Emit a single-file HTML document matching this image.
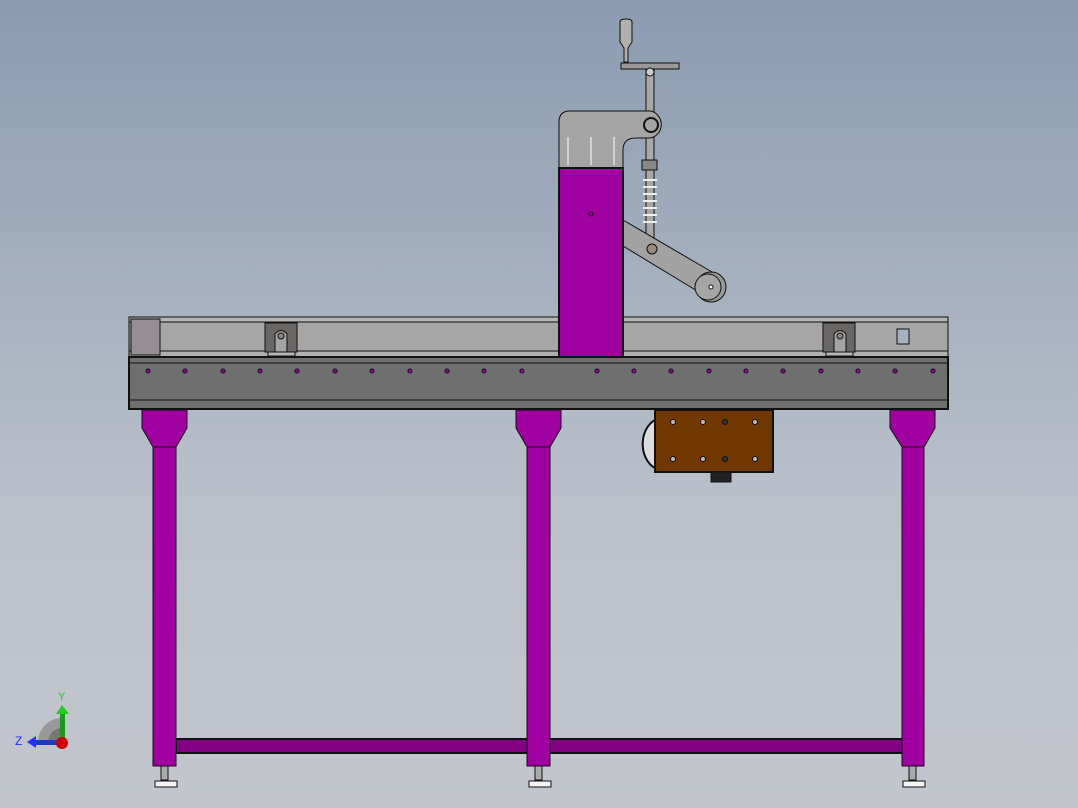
<!DOCTYPE html>
<html><head><style>
html,body{margin:0;padding:0;width:1078px;height:808px;overflow:hidden}
body{background:linear-gradient(#8a9bb1,#b9bfca 60%,#c3c6cd)}
svg{position:absolute;left:0;top:0}
</style></head><body>
<svg width="1078" height="808" viewBox="0 0 1078 808" stroke="#111" stroke-width="1">
<!-- top rail -->
<rect x="129" y="317" width="819" height="40" fill="#a6a6a6"/>
<rect x="129" y="317" width="819" height="5" fill="#b4b4b4"/>
<rect x="129" y="351" width="819" height="6" fill="#b0b0b0"/>
<rect x="131" y="319" width="29" height="36" fill="#958e92"/>
<!-- pivots -->
<rect x="265" y="323" width="32" height="29" fill="#6a6663"/>
<path d="M275,352 L275,334 Q281,327 287,334 L287,352 Z" fill="#a4a4a4"/>
<circle cx="281" cy="336" r="3" fill="#888"/>
<rect x="268" y="352" width="27" height="4" fill="#b8b8b8"/>
<rect x="823" y="323" width="32" height="29" fill="#6a6663"/>
<path d="M834,352 L834,334 Q840,327 846,334 L846,352 Z" fill="#a4a4a4"/>
<circle cx="840" cy="336" r="3" fill="#888"/>
<rect x="826" y="352" width="27" height="4" fill="#b8b8b8"/>
<rect x="897" y="329" width="12" height="15" fill="#a6b0c0"/>
<!-- beam -->
<rect x="129" y="357" width="819" height="52" fill="#6f6f6f" stroke-width="2"/>
<line x1="129" y1="363" x2="948" y2="363"/>
<line x1="129" y1="400" x2="948" y2="400"/>
<g fill="#a000a0" stroke-width="1">
<circle cx="148" cy="371" r="2"/><circle cx="185" cy="371" r="2"/><circle cx="223" cy="371" r="2"/><circle cx="260" cy="371" r="2"/><circle cx="297" cy="371" r="2"/><circle cx="335" cy="371" r="2"/><circle cx="372" cy="371" r="2"/><circle cx="410" cy="371" r="2"/><circle cx="447" cy="371" r="2"/><circle cx="484" cy="371" r="2"/><circle cx="522" cy="371" r="2"/><circle cx="597" cy="371" r="2"/><circle cx="634" cy="371" r="2"/><circle cx="671" cy="371" r="2"/><circle cx="709" cy="371" r="2"/><circle cx="746" cy="371" r="2"/><circle cx="783" cy="371" r="2"/><circle cx="821" cy="371" r="2"/><circle cx="858" cy="371" r="2"/><circle cx="895" cy="371" r="2"/><circle cx="933" cy="371" r="2"/>
</g>
<!-- bottom bar -->
<rect x="176" y="739" width="726" height="14" fill="#820082" stroke-width="2"/>
<!-- legs -->
<g fill="#a000a0">
<path d="M142,410 H187 V428 L176,447 H153 L142,428 Z"/>
<rect x="153" y="447" width="23" height="319"/>
<path d="M516,410 H561 V428 L550,447 H527 L516,428 Z"/>
<rect x="527" y="447" width="23" height="319"/>
<path d="M890,410 H935 V428 L924,447 H902 L890,428 Z"/>
<rect x="902" y="447" width="22" height="319"/>
</g>
<g fill="#aaa">
<rect x="161" y="766" width="7" height="14"/><rect x="535" y="766" width="7" height="14"/><rect x="909" y="766" width="7" height="14"/>
</g>
<g fill="#f4f4f4">
<rect x="155" y="781" width="22" height="6"/><rect x="529" y="781" width="22" height="6"/><rect x="903" y="781" width="22" height="6"/>
</g>
<!-- brown box -->
<path d="M655,420 A20,26 0 0 0 655,468" fill="#ddd" stroke-width="2"/>
<rect x="655" y="410" width="118" height="62" fill="#703800" stroke-width="2"/>
<rect x="711" y="472" width="20" height="10" fill="#222"/>
<g fill="#bbb"><circle cx="673" cy="422" r="2.5"/><circle cx="755" cy="422" r="2.5"/><circle cx="673" cy="459" r="2.5"/><circle cx="755" cy="459" r="2.5"/><circle cx="703" cy="422" r="2.5"/><circle cx="703" cy="459" r="2.5"/></g>
<g fill="#333"><circle cx="725" cy="422" r="2.5"/><circle cx="725" cy="459" r="2.5"/></g>
<!-- clamp -->
<rect x="646" y="68" width="8" height="172" fill="#a8a8a8"/>
<rect x="621" y="63" width="58" height="6" fill="#999"/>
<circle cx="650" cy="72" r="4" fill="#ccc"/>
<path d="M620,22 Q620,19 626,19 Q632,19 632,22 L632,42 L628,48 L628,62 H624 L624,48 L620,42 Z" fill="#b0b0b0"/>
<rect x="642" y="160" width="15" height="10" fill="#888"/>
<g stroke="#eee" stroke-width="2"><line x1="643" y1="180" x2="657" y2="180"/><line x1="643" y1="187" x2="657" y2="187"/><line x1="643" y1="194" x2="657" y2="194"/><line x1="643" y1="201" x2="657" y2="201"/><line x1="643" y1="208" x2="657" y2="208"/><line x1="643" y1="215" x2="657" y2="215"/><line x1="643" y1="222" x2="657" y2="222"/></g>
<path d="M623,220 L712,272 L712,300 L623,246 Z" fill="#a2a2a2"/>
<circle cx="711" cy="287" r="15" fill="#999"/>
<circle cx="708" cy="287" r="13" fill="#a6a6a6"/>
<circle cx="711" cy="287" r="2" fill="#fff"/>
<circle cx="652" cy="249" r="5" fill="#9a8a7a"/>
<path d="M559,168 L559,122 Q559,111 570,111 L651,111 A14,14 0 0 1 651,138 L636,138 Q623,138 623,150 L623,168 Z" fill="#a4a4a4"/>
<circle cx="651" cy="125" r="7" fill="none" stroke-width="2"/>
<g stroke="#fff"><line x1="568" y1="137" x2="568" y2="165"/><line x1="591" y1="137" x2="591" y2="165"/><line x1="614" y1="137" x2="614" y2="165"/></g>
<rect x="559" y="168" width="64" height="189" fill="#a000a0" stroke-width="2"/>
<circle cx="591" cy="214" r="2" fill="#a000a0"/>
<!-- triad -->
<path d="M38,742 A24,24 0 0 1 62,718 L62,742 Z" fill="#999" stroke="none"/>
<path d="M48,742 A14,14 0 0 1 62,728 L62,742 Z" fill="#777" stroke="none"/>
<rect x="60" y="712" width="5" height="30" fill="#1a9a1a" stroke="none"/>
<path d="M56,714 L62,705 L69,714 Z" fill="#2c2" stroke="none"/>
<rect x="34" y="740" width="28" height="5" fill="#1a3acc" stroke="none"/>
<path d="M36,736 L27,742 L36,748 Z" fill="#23f" stroke="none"/>
<circle cx="62" cy="743" r="6" fill="#c00" stroke="none"/>
<text x="58" y="700" font-family="Liberation Sans,sans-serif" font-size="11" fill="#2c2" stroke="none">Y</text>
<text x="15" y="745" font-family="Liberation Sans,sans-serif" font-size="12" fill="#23f" stroke="none">Z</text>
</svg>
</body></html>
